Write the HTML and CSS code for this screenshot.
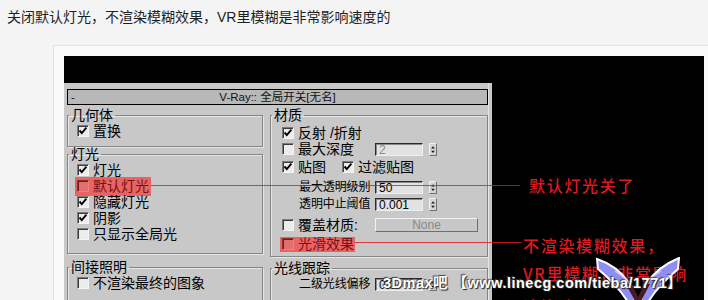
FILE: index.html
```html
<!DOCTYPE html>
<html lang="zh">
<head>
<meta charset="utf-8">
<title>VR 全局开关</title>
<link rel="stylesheet" href="styles.css">
</head>
<body>
<p class="post">关闭默认灯光，不渲染模糊效果，VR里模糊是非常影响速度的</p>
<div class="frame">
  <div class="shot">
    <div class="dialog">
      <div class="titlebar"><span class="collapse">-</span><span class="title">V-Ray:: 全局开关[无名]</span><span></span></div>
      <div class="cols">
        <div class="col col-left">
          <fieldset class="group g-geo">
            <legend>几何体</legend>
            <div class="row mt1"><span class="cb"><svg viewBox="0 0 10 10"><path d="M1.5 4.5l2.3 2.6 4.6-5.4"/></svg></span><span>置换</span></div>
          </fieldset>
          <fieldset class="group g-light">
            <legend>灯光</legend>
            <div class="row mt1"><span class="cb"><svg viewBox="0 0 10 10"><path d="M1.5 4.5l2.3 2.6 4.6-5.4"/></svg></span><span>灯光</span></div>
            <div class="row"><span class="hl hl-tall"><span class="cb"></span><span>默认灯光</span></span></div>
            <div class="row"><span class="cb"><svg viewBox="0 0 10 10"><path d="M1.5 4.5l2.3 2.6 4.6-5.4"/></svg></span><span>隐藏灯光</span></div>
            <div class="row"><span class="cb"><svg viewBox="0 0 10 10"><path d="M1.5 4.5l2.3 2.6 4.6-5.4"/></svg></span><span>阴影</span></div>
            <div class="row"><span class="cb"></span><span>只显示全局光</span></div>
          </fieldset>
          <fieldset class="group g-gi">
            <legend>间接照明</legend>
            <div class="row mt1"><span class="cb"></span><span>不渲染最终的图象</span></div>
          </fieldset>
        </div>
        <div class="col col-right">
          <fieldset class="group g-mat">
            <legend>材质</legend>
            <div class="row mt3"><span class="cb"><svg viewBox="0 0 10 10"><path d="M1.5 4.5l2.3 2.6 4.6-5.4"/></svg></span><span>反射 /折射</span></div>
            <div class="row">
              <span class="lead"><span class="cb"></span><span>最大深度</span></span>
              <span class="num disabled">2</span><span class="spin"><svg viewBox="0 0 8 13"><path d="M4 2L6.5 5H1.5Z M4 11L6.5 8H1.5Z"/></svg></span>
            </div>
            <div class="row mt2"><span class="cb"><svg viewBox="0 0 10 10"><path d="M1.5 4.5l2.3 2.6 4.6-5.4"/></svg></span><span>贴图</span><span class="cb cb-next"><svg viewBox="0 0 10 10"><path d="M1.5 4.5l2.3 2.6 4.6-5.4"/></svg></span><span>过滤贴图</span></div>
            <div class="row mt4">
              <span class="lead indent"><span>最大透明级别</span></span>
              <span class="num">50</span><span class="spin"><svg viewBox="0 0 8 13"><path d="M4 2L6.5 5H1.5Z M4 11L6.5 8H1.5Z"/></svg></span>
            </div>
            <div class="row mt1">
              <span class="lead indent"><span>透明中止阈值</span></span>
              <span class="num">0.001</span><span class="spin"><svg viewBox="0 0 8 13"><path d="M4 2L6.5 5H1.5Z M4 11L6.5 8H1.5Z"/></svg></span>
            </div>
            <div class="row mt5">
              <span class="lead"><span class="cb"></span><span>覆盖材质:</span></span>
              <span class="btn">None</span>
            </div>
            <div class="row mt3"><span class="hl hl-short"><span class="cb"></span><span>光滑效果</span></span></div>
          </fieldset>
          <fieldset class="group g-ray">
            <legend>光线跟踪</legend>
            <div class="row mt1">
              <span class="lead indent"><span>二级光线偏移</span></span>
              <span class="num">0.0</span><span class="spin"><svg viewBox="0 0 8 13"><path d="M4 2L6.5 5H1.5Z M4 11L6.5 8H1.5Z"/></svg></span>
            </div>
          </fieldset>
        </div>
      </div>
    </div>

    <span class="redline line-1"></span>
    <span class="redline line-2"></span>
    <p class="note note-1">默认灯光关了</p>
    <p class="note note-2">不渲染模糊效果，<br>VR里模糊，非常影响<br><span class="note-last">渲染速度</span></p>
    <svg class="logo" viewBox="0 0 86 50" width="86" height="50">
      <path d="M2 2C14 6 26 14 34 26L42 49L35 49C28 35 16 23 3 12Z" fill="#8f8ff2" stroke="#fff" stroke-width="2"/>
      <path d="M84 1C72 6 60 14 52 26L44 49L51 49C58 35 70 23 83 12Z" fill="#8f8ff2" stroke="#fff" stroke-width="2"/>
      <path d="M31 27L43 50L55 27L49 27L43 40L37 27Z" fill="#4a1828"/>
      <path d="M20 14C26 18 31 22 34 27M66 14C60 18 55 22 52 27" fill="none" stroke="#c8c8ff" stroke-width="1.5"/>
    </svg>
    <p class="watermark">3Dmax吧 【www.linecg.com/tieba/1771】</p>
  </div>
</div>
</body>
</html>
```
FILE: styles.css
```css
* { box-sizing: border-box; }
html, body { margin: 0; }
body {
  background: #f4f4f4;
  font-family: "Liberation Sans", "Noto Sans CJK SC", sans-serif;
  overflow: hidden;
  height: 300px;
}
.post {
  margin: 0;
  height: 45px;
  padding: 9px 0 0 7px;
  font-size: 14px;
  line-height: 16px;
  color: #1e1e1e;
}
.frame {
  margin-left: 53px;
  border-top: 1px solid #e2e2e2;
  border-left: 1px solid #e2e2e2;
  background: #fafafa;
  padding: 10px 0 0 10px;
  height: 260px;
}
.shot {
  position: relative;
  width: 640px;
  height: 250px;
  background: #000;
  padding-top: 27px;
  overflow: hidden;
}
.dialog {
  width: 428px;
  height: 230px;
  background: #c8c8c8;
  padding: 6px 4px 0 3px;
  font-size: 14px;
  color: #000;
  box-shadow: inset -3px 0 0 #c8c8c8, inset -4px 0 0 #e2e2e2;
}
.titlebar {
  height: 16px;
  border: 1px solid #000;
  background: #b8b8b8;
  display: grid;
  grid-template-columns: 1fr auto 1fr;
  align-items: center;
  font-size: 11.5px;
  line-height: 14px;
  color: #111;
}
.collapse { padding-left: 3px; }
.cols {
  display: flex;
  gap: 7px;
  margin-top: 3px;
}
.col-left { width: 196px; }
.col-right { width: 218px; }
.group {
  margin: 0;
  min-width: 0;
  border: 1px solid #858585;
  box-shadow: inset 1px 1px 0 #e6e6e6, 1px 1px 0 #e6e6e6;
  padding: 0 0 0 9px;
}
.col-right .group { padding-left: 11px; }
.group legend {
  padding: 0 2px;
  margin-left: -8px;
  font-size: 14px;
  line-height: 14px;
}
.col-right .group legend { margin-left: -10px; }
.g-geo { padding-bottom: 7px; }
.g-light { padding-bottom: 11px; }
.g-gi { margin-top: 6px; height: 60px; }
.g-mat { padding-bottom: 4px; }
.g-ray { margin-top: 4px; height: 60px; }

.row {
  display: flex;
  align-items: center;
  height: 16px;
  line-height: 16px;
  white-space: nowrap;
}
.mt1 { margin-top: 1px; }
.mt2 { margin-top: 2px; }
.mt3 { margin-top: 3px; }
.mt4 { margin-top: 4px; }
.mt5 { margin-top: 5px; }

.cb {
  flex: none;
  width: 12px;
  height: 12px;
  margin-right: 4px;
  border: 1px solid;
  border-color: #7a7a7a #f4f4f4 #f4f4f4 #7a7a7a;
  box-shadow: inset 1px 1px 0 #3c3c3c;
  background: #ececec;
  display: flex;
}
.cb svg { width: 10px; height: 10px; }
.cb path { fill: none; stroke: #000; stroke-width: 1.9; }
.cb-next { margin-left: 16px; }

.lead { display: flex; align-items: center; width: 93px; flex: none; }
.lead.indent { padding-left: 17px; font-size: 12px; letter-spacing: -0.1px; }
.num {
  width: 48px;
  height: 13px;
  border: 1px solid;
  border-color: #2a2a2a #eeeeee #eeeeee #2a2a2a;
  box-shadow: inset 1px 1px 0 #8a8a8a;
  background: #e2e2e2;
  font-size: 12px;
  line-height: 12px;
  padding-left: 3px;
  color: #000;
}
.num.disabled { color: #8a8a8a; }
.spin {
  margin-left: 6px;
  width: 8px;
  height: 13px;
  background: #d4d4d4;
  border: 1px solid;
  border-color: #f0f0f0 #707070 #707070 #f0f0f0;
  display: flex;
}
.spin svg { width: 6px; height: 11px; }
.spin path { fill: #1a1a1a; }
.btn {
  width: 103px;
  height: 14px;
  border: 1px solid;
  border-color: #f2f2f2 #6e6e6e #6e6e6e #f2f2f2;
  background: #c8c8c8;
  font-size: 12px;
  line-height: 12px;
  color: #8a8a8a;
  text-align: center;
}
.hl {
  display: inline-flex;
  align-items: center;
  margin-left: -2px;
  padding: 0 2px;
  background: #ea6262;
  color: #6e1414;
}
.hl-tall { height: 19px; }
.hl-short { height: 15px; padding-right: 1px; }
.hl .cb {
  background: #e07070;
  border-color: #8c3030 #f08080 #f08080 #8c3030;
  box-shadow: inset 1px 1px 0 #6a2020;
}

.redline {
  position: absolute;
  height: 1px;
  background: rgba(226, 24, 24, 0.8);
}
.line-1 { left: 87px; top: 129px; width: 369px; }
.line-2 { left: 291px; top: 186px; width: 167px; }
.note {
  position: absolute;
  margin: 0;
  color: #dc1a20;
  font-family: "Noto Sans CJK SC", sans-serif;
  font-size: 16px;
  letter-spacing: 1.7px;
  font-weight: 500;
  white-space: nowrap;
}
.note-1 { left: 465px; top: 120px; line-height: 18px; }
.note-2 { left: 459px; top: 175px; line-height: 28px; }
.note-last { display: inline-block; margin-top: 5px; }
.logo { position: absolute; left: 531px; top: 201px; }
.watermark {
  position: absolute;
  margin: 0;
  left: 319px;
  top: 218px;
  line-height: 18px;
  font-size: 14.5px;
  font-weight: bold;
  letter-spacing: 0.5px;
  color: #fff;
  white-space: nowrap;
  text-shadow: 1px 1px 1px #222, -1px -1px 1px #444;
}
```
